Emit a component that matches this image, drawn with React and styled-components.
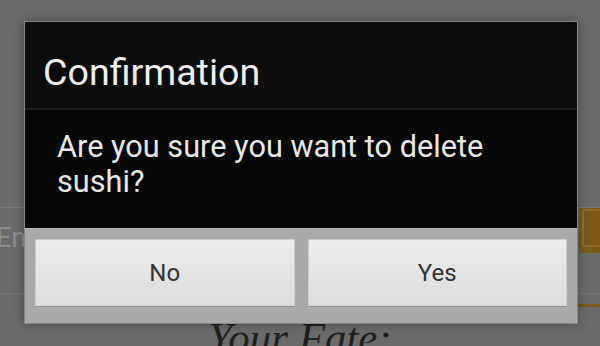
import * as React from "react";
import styled, { createGlobalStyle } from "styled-components";

const GlobalStyle = createGlobalStyle`
  html, body {
    margin: 0;
    padding: 0;
    background: #6b6b6b;
    overflow: hidden;
  }
  * {
    box-sizing: border-box;
  }
`;

const Screen = styled.div`
  position: relative;
  width: 600px;
  height: 346px;
  overflow: hidden;
  background: #6b6b6b;
  font-family: Roboto, "Noto Sans", sans-serif;
`;

// the app page, dimmed behind the dialog
const Page = styled.div`
  display: flex;
  flex-direction: column;
  padding-top: 207px;
`;

const InputRow = styled.div`
  display: flex;
  align-items: flex-start;
  justify-content: space-between;
  height: 87px;
  border-top: 1px solid #7b7b7b;
  border-bottom: 1px solid #777;
`;

const InputText = styled.span`
  margin: 14px 0 0 -4px;
  font-size: 27px;
  color: #8e8e8e;
`;

const OrangeButton = styled.div`
  width: 80px;
  height: 45px;
  margin-right: -59px;
  background: #7a5818;
  padding: 1px 5px 10px 3px;

  &::after {
    content: "";
    display: block;
    height: 100%;
    border: 2px solid #8e6f31;
  }
`;

const OrangeRule = styled.div`
  align-self: flex-end;
  width: 80px;
  height: 3px;
  margin-top: 10px;
  background: #7a5818;
`;

const Heading = styled.h1`
  margin: 6px 0 0;
  text-align: center;
  font-family: "Liberation Serif", serif;
  font-style: italic;
  font-weight: normal;
  font-size: 43px;
  color: #1f1f1f;
`;

const Dialog = styled.div`
  position: absolute;
  left: 24px;
  top: 21px;
  width: 554px;
  display: flex;
  flex-direction: column;
  border: 1px solid #858585;
  box-shadow: 0 0 10px rgba(0, 0, 0, 0.35);
`;

const TitleBar = styled.div`
  height: 88px;
  padding: 29px 0 0 18px;
  background: #0d0d0d;
  border-bottom: 2px solid #1e1e1e;
  color: #ededed;
  font-size: 37.6px;
  line-height: 42px;
`;

const Message = styled.div`
  height: 118px;
  padding: 19px 20px 0 32px;
  background: #060606;
  color: #e8e8e8;
  font-size: 30.7px;
  line-height: 35px;
`;

const ButtonBar = styled.div`
  display: grid;
  grid-template-columns: 1fr 1fr;
  gap: 13px;
  padding: 10px 10px 16px;
  background: #a9a9a9;
  border-top: 1px solid #b5b5b5;
`;

const Button = styled.button`
  height: 68px;
  border: 1px solid #cdcdcd;
  border-bottom-color: #8c8c8c;
  border-radius: 2px;
  background: linear-gradient(#ececec, #dcdcdc);
  font-family: Roboto, "Noto Sans", sans-serif;
  font-size: 24px;
  color: #333;
  padding: 0;
`;

export default function App() {
  return (
    <Screen>
      <GlobalStyle />
      <Page>
        <InputRow>
          <InputText>Enter a food</InputText>
          <OrangeButton />
        </InputRow>
        <OrangeRule />
        <Heading>Your Fate:</Heading>
      </Page>
      <Dialog>
        <TitleBar>Confirmation</TitleBar>
        <Message>Are you sure you want to delete sushi?</Message>
        <ButtonBar>
          <Button>No</Button>
          <Button>Yes</Button>
        </ButtonBar>
      </Dialog>
    </Screen>
  );
}
